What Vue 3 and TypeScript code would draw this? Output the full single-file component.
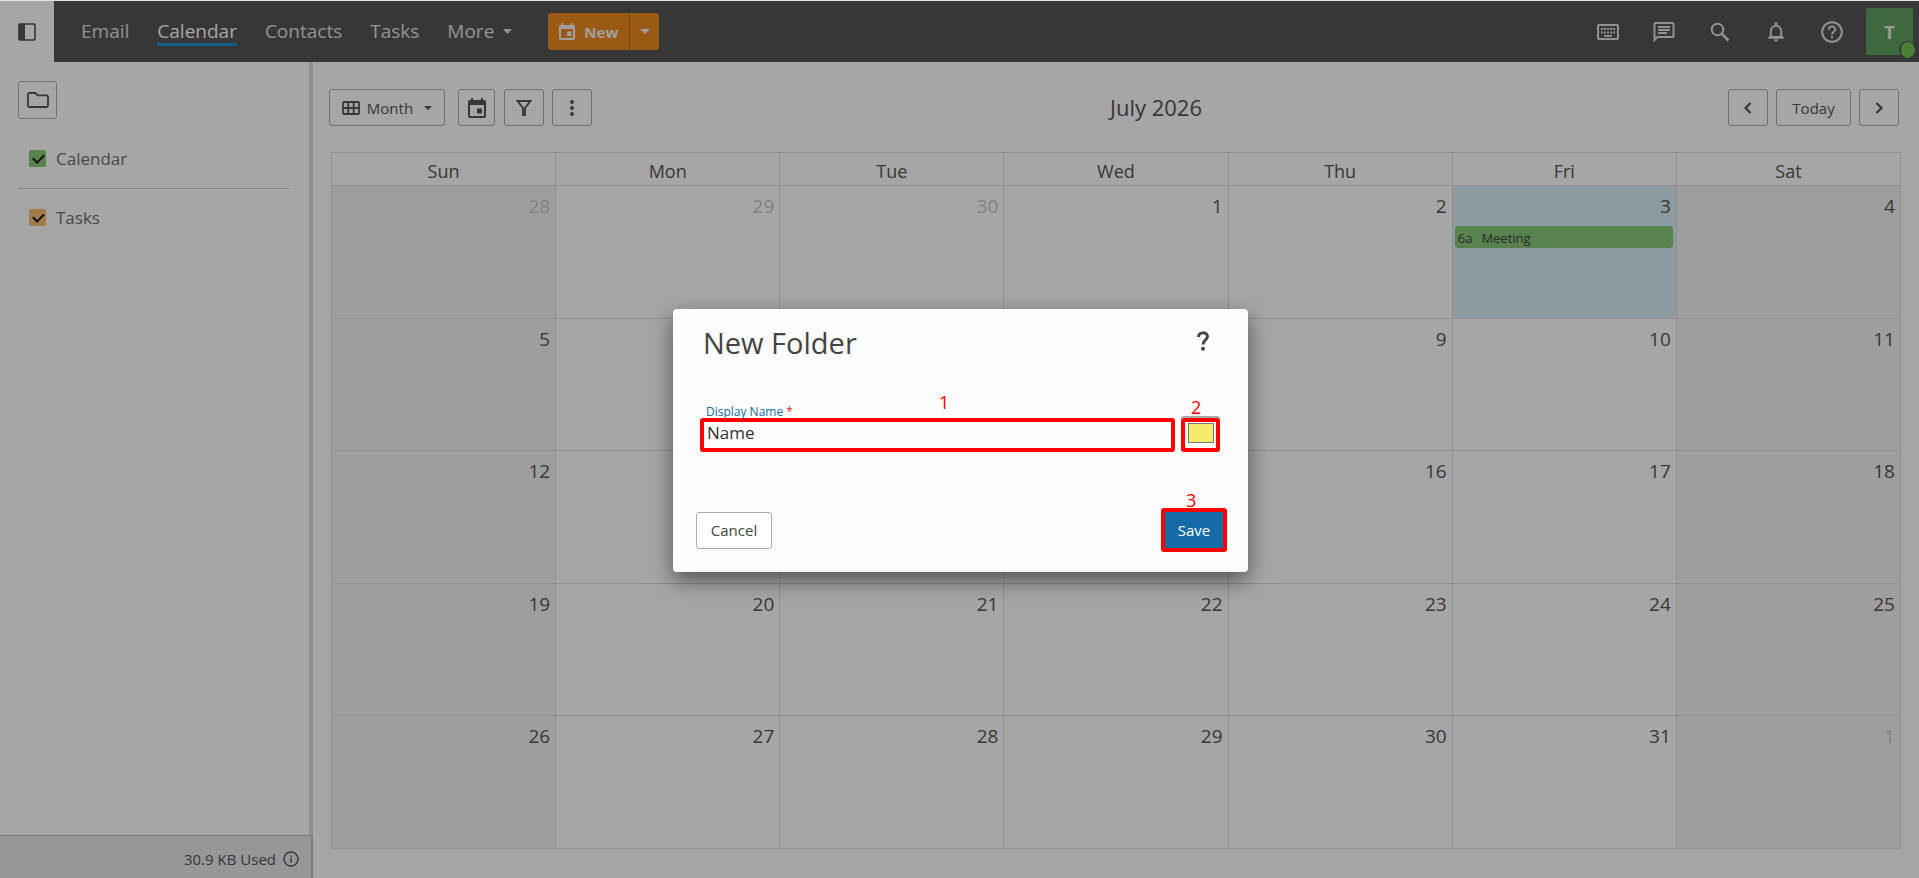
<script setup lang="ts">
import { ref } from 'vue'

interface Day { n: number; other?: boolean; today?: boolean; event?: { time: string; title: string } }

const dayNames: string[] = ['Sun', 'Mon', 'Tue', 'Wed', 'Thu', 'Fri', 'Sat']
const weeks: Day[][] = Array.from({ length: 5 }, (_, w) =>
  Array.from({ length: 7 }, (_, d): Day => {
    const i = w * 7 + d - 2
    if (i < 1) return { n: 30 + i, other: true }
    if (i > 31) return { n: i - 31, other: true }
    return i === 3 ? { n: i, today: true, event: { time: '6a', title: 'Meeting' } } : { n: i }
  })
)
const folderName = ref('Name')
const showCalendar = ref(true)
const showTasks = ref(true)
</script>

<template>
  <div class="app">
    <header class="topbar">
      <button class="panel-toggle" aria-label="Toggle folder panel">
        <svg width="18" height="18" viewBox="0 0 18 18"><rect x="1" y="1" width="16" height="16" rx="1" fill="none" stroke="currentColor" stroke-width="1.6" /><path d="M1 1h6v16H1z" fill="currentColor" /></svg>
      </button>
      <nav class="nav">
        <a href="#">Email</a>
        <a href="#" class="active">Calendar</a>
        <a href="#">Contacts</a>
        <a href="#">Tasks</a>
        <a href="#" class="more">More <svg width="9" height="5" viewBox="0 0 9 5"><path d="M0 0h9L4.500 5z" fill="currentColor" /></svg></a>
      </nav>
      <div class="new-group">
        <button class="new-main">
          <svg width="16" height="17" viewBox="0 0 16 17" fill="currentColor"><path fill-rule="evenodd" d="M2.500 0h2v2h7V0h2v2H14a2 2 0 0 1 2 2v11a2 2 0 0 1-2 2H2a2 2 0 0 1-2-2V4a2 2 0 0 1 2-2h.5zM2 6v9h12V6z" /><path d="M8 8.500h4.500V13H8z" /></svg>
          New
        </button>
        <button class="new-drop" aria-label="More new items"><svg width="10" height="5" viewBox="0 0 10 5"><path d="M0 0h10L5 5z" fill="currentColor" /></svg></button>
      </div>
      <div class="tools">
        <button aria-label="Keyboard shortcuts"><svg width="22" height="16" viewBox="0 0 22 16"><rect x="1" y="1" width="20" height="14" rx="1" fill="none" stroke="currentColor" stroke-width="2" /><path d="M4 5h14M4 8.500h14" stroke="currentColor" stroke-width="2" stroke-dasharray="2 1" /><path d="M7 12h8" stroke="currentColor" stroke-width="1.800" /></svg></button>
        <button aria-label="Chat"><svg width="22" height="20" viewBox="0 0 22 20" fill="none" stroke="currentColor" stroke-width="2"><path d="M1.500 18V2a1 1 0 0 1 1-1h17a1 1 0 0 1 1 1v12a1 1 0 0 1-1 1h-15z" /><path d="M5 5h12M5 8h12M5 11h9" stroke-width="1.800" /></svg></button>
        <button aria-label="Search"><svg width="20" height="20" viewBox="0 0 20 20" fill="none" stroke="currentColor" stroke-width="2"><circle cx="7.500" cy="7.500" r="5.800" /><path d="M11.800 11.800l6.700 6.700" stroke-width="2.600" /></svg></button>
        <button aria-label="Notifications"><svg width="18" height="20" viewBox="0 0 18 20"><path d="M2 15.500h14M3.800 15V9a5.200 5.200 0 0 1 10.400 0v6" fill="none" stroke="currentColor" stroke-width="1.900" /><path d="M2.500 14L.5 16.400h17l-2-2.400zM7.700 1.300a1.300 1.300 0 0 1 2.600 0V4H7.700zM7 17.500h4a2 2 0 0 1-4 0z" fill="currentColor" /></svg></button>
        <button aria-label="Help"><svg width="22" height="22" viewBox="0 0 22 22" fill="none" stroke="currentColor" stroke-width="2"><circle cx="11" cy="11" r="9.800" /><path d="M7.800 8.800c0-4.400 6.500-4.200 6.500-.5 0 2.400-3.300 2.500-3.300 5.200" /><path d="M11 15v2.200" /></svg></button>
        <button class="avatar" aria-label="Account">T<span class="presence"></span></button>
      </div>
    </header>

    <div class="body">
      <aside class="sidebar">
        <div class="folders">
          <button class="btn folder-btn" aria-label="New folder"><svg width="22" height="16" viewBox="0 0 22 16"><path d="M2.500 1h5.800l2.400 2.400h8.800q1.500 0 1.500 1.500v8.600q0 1.500-1.500 1.500h-17Q1 15 1 13.500v-11Q1 1 2.500 1z" fill="none" stroke="currentColor" stroke-width="1.800" /></svg></button>
          <label class="folder"><input v-model="showCalendar" type="checkbox" class="green" />Calendar</label>
          <hr />
          <label class="folder"><input v-model="showTasks" type="checkbox" class="orange" />Tasks</label>
        </div>
        <footer class="quota">
          30.9 KB Used
          <svg width="16" height="16" viewBox="0 0 16 16" fill="none" stroke="currentColor" stroke-width="1.400"><circle cx="8" cy="8" r="7" /><path d="M8 7v4.500M8 4.500V6" /></svg>
        </footer>
      </aside>

      <main class="main">
        <div class="toolbar">
          <button class="btn month">
            <svg width="18" height="14" viewBox="0 0 18 14" fill="none" stroke="currentColor" stroke-width="1.800"><rect x="1" y="1" width="16" height="12" rx="1" /><path d="M1 7h16M6.300 1v12M11.700 1v12" /></svg>
            Month
            <svg class="caret" width="8" height="4" viewBox="0 0 8 4"><path d="M0 0h8L4 4z" fill="currentColor" /></svg>
          </button>
          <button class="btn pick" aria-label="Pick date"><svg width="18" height="20" viewBox="0 0 18 20" fill="currentColor"><path fill-rule="evenodd" d="M3 0h2v2h8V0h2v2h1a2 2 0 0 1 2 2v14a2 2 0 0 1-2 2H2a2 2 0 0 1-2-2V4a2 2 0 0 1 2-2h1zM2 7v11h14V7z" /><path d="M9 10.500h5v5H9z" /></svg></button>
          <button class="btn square" aria-label="Filter"><svg width="16" height="16" viewBox="0 0 16 16"><path d="M1.500 1h13L9 8v7H7V8z" fill="none" stroke="currentColor" stroke-width="1.800" /></svg></button>
          <button class="btn square" aria-label="More actions"><svg width="4" height="16" viewBox="0 0 4 16" fill="currentColor"><circle cx="2" cy="2" r="2" /><circle cx="2" cy="8" r="2" /><circle cx="2" cy="14" r="2" /></svg></button>
          <h1>July 2026</h1>
          <div class="pager">
            <button class="btn square" aria-label="Previous month"><svg width="8" height="12" viewBox="0 0 8 12"><path d="M6.500 1l-5 5 5 5" fill="none" stroke="currentColor" stroke-width="2.200" /></svg></button>
            <button class="btn today-btn">Today</button>
            <button class="btn square" aria-label="Next month"><svg width="8" height="12" viewBox="0 0 8 12"><path d="M1.500 1l5 5-5 5" fill="none" stroke="currentColor" stroke-width="2.200" /></svg></button>
          </div>
        </div>
        <table class="grid">
          <thead><tr><th v-for="d in dayNames" :key="d" scope="col">{{ d }}</th></tr></thead>
          <tbody>
            <tr v-for="(week, w) in weeks" :key="w">
              <td v-for="(day, d) in week" :key="d" :class="{ weekend: d === 0 || d === 6, other: day.other, today: day.today }">
                <div class="num">{{ day.n }}</div>
                <div v-if="day.event" class="event"><span>{{ day.event.time }}</span><span>{{ day.event.title }}</span></div>
              </td>
            </tr>
          </tbody>
        </table>
      </main>
    </div>

    <div class="backdrop">
      <section class="dialog" role="dialog" aria-modal="true" aria-labelledby="dialog-title">
        <div class="dialog-head">
          <h2 id="dialog-title">New Folder</h2>
          <button class="help" aria-label="Help"><svg width="12" height="20" viewBox="0 0 12 20"><path d="M1.500 6C1.500 .4 10.500 .6 10.500 5.600 10.500 9 6 9 6 13.500" fill="none" stroke="currentColor" stroke-width="2.900" /><circle cx="6" cy="17.700" r="2" fill="currentColor" /></svg></button>
        </div>
        <div class="fields">
          <div class="name-field">
            <label for="folder-name">Display Name <span class="req">*</span></label>
            <input id="folder-name" v-model="folderName" type="text" class="marked" />
            <span class="mark mark-name">1</span>
          </div>
          <div class="color-field">
            <button class="color marked" aria-label="Folder color"><span class="swatch"></span></button>
            <span class="mark mark-color">2</span>
          </div>
        </div>
        <div class="actions">
          <button class="cancel">Cancel</button>
          <div class="save-wrap">
            <button class="save marked">Save</button>
            <span class="mark mark-save">3</span>
          </div>
        </div>
      </section>
    </div>
  </div>
</template>

<style>
html, body, #app { height: 100%; }
body { margin: 0; }
</style>

<style scoped>
.app { position: relative; box-sizing: border-box; display: flex; flex-direction: column; min-height: 100%; border-top: 1px solid #dfe3df; background: #fff; color: #555; font-family: "Segoe UI", "Open Sans", "Noto Sans", sans-serif; font-size: 16px; }
.app * { box-sizing: border-box; }
button { font: inherit; color: inherit; background: none; border: 0; padding: 0; display: flex; align-items: center; justify-content: center; }
svg { display: block; flex: none; }
.topbar { display: flex; align-items: center; height: 61px; flex: none; background: #555; color: #e0e0e0; }
.panel-toggle { width: 54px; height: 61px; background: #fff; color: #555; }
.nav { display: flex; gap: 28px; margin-left: 27px; padding-top: 2px; font-size: 19px; line-height: 24px; }
.nav a { color: inherit; text-decoration: none; border-bottom: 3px solid transparent; }
.nav a.active { color: #fff; border-color: #1f90d0; }
.nav .more { display: flex; align-items: center; gap: 9px; }
.new-group { display: flex; height: 37px; margin-left: 36px; background: #ed8a20; border-radius: 3px; color: #f4f4f4; }
.new-main { width: 82px; gap: 9px; font-size: 15px; font-weight: 700; border-right: 1px solid #bd6a10; }
.new-drop { width: 29px; }
.tools { display: flex; align-items: center; margin-left: auto; gap: 12px; padding-right: 6px; }
.tools button { width: 44px; height: 47px; }
.tools .avatar { position: relative; width: 47px; background: #60a060; border-radius: 2px; font-weight: 700; font-size: 18px; color: #eee; }
.presence { position: absolute; right: -2px; bottom: -3px; width: 16px; height: 17px; border-radius: 50%; background: #74c550; border: 2px solid #555; border-width: 1px 0 0 2px; }

.body { display: flex; flex: 1; }
.sidebar { display: flex; flex-direction: column; width: 313px; flex: none; }
.folders { flex: 1; padding: 19px 19px 0 18px; border-right: 4px solid #dcdcdc; }
.btn { height: 37px; border: 1px solid #acacac; border-radius: 3px; }
.folder-btn { width: 39px; height: 38px; }
.folder { display: flex; align-items: center; gap: 10px; margin-left: 11px; height: 56px; font-size: 17px; color: #707070; }
.folder-btn + .folder { margin-top: 13px; padding-bottom: 4px; }
.folder input { appearance: none; margin: 0; width: 17px; height: 17px; border-radius: 2px; background: #88ca78; }
.folder input.orange { background: #f8bd70; }
.folder input:checked::after { content: ""; display: block; width: 9px; height: 5px; margin: 4px 0 0 4px; border: solid #181818; border-width: 0 0 2px 2px; transform: rotate(-45deg); }
hr { margin: 0 0 0 1px; border: 0; border-top: 1px solid #d4d4d4; }
.quota { display: flex; align-items: center; justify-content: flex-end; gap: 7px; height: 43px; padding: 3px 12px 0 0; background: #e8e8e8; border: solid #bdbdbd; border-width: 1px 2px 0 0; font-size: 15px; }

.main { flex: 1; min-width: 0; display: flex; flex-direction: column; padding: 27px 18px 29px 16px; }
.toolbar { display: flex; height: 37px; padding-right: 2px; }
.month { width: 116px; gap: 7px; font-size: 15px; }
.month .caret { margin-left: 4px; }
.pick { width: 37px; margin-left: 13px; }
.square { width: 40px; }
.pick + .square { margin-left: 9px; }
.square + .square { margin-left: 8px; }
h1 { flex: 1; text-align: center; padding-right: 8px; margin: 0; font-size: 22px; line-height: 37px; font-weight: 400; }
.pager { display: flex; gap: 8px; }
.today-btn { width: 75px; font-size: 15px; }
.grid { flex: 1; margin: 26px 0 0 2px; border-collapse: collapse; display: grid; grid-template-rows: 33px 1fr; border: solid #dcdcdc; border-width: 1px 0 0 1px; }
.grid tbody { display: grid; grid-template-rows: repeat(5, 1fr); }
.grid tr { display: grid; grid-template-columns: repeat(7, 1fr); }
.grid th, .grid td { padding: 0; border: solid #dcdcdc; border-width: 0 1px 1px 0; }
.grid th { font-size: 18px; font-weight: 400; line-height: 36px; height: 33px; }
.grid td { padding: 6px 3px 0 2px; font-size: 19px; line-height: 28px; }
.num { text-align: right; padding-right: 2px; }
.weekend { background: #f3f3f3; }
.today { background: #d9edf7; }
.other { color: #c8c8c8; }
.event { display: flex; gap: 9px; height: 22px; margin-top: 6px; padding: 0 3px; border-radius: 4px; background: #88ca78; color: #444; font-size: 13px; line-height: 24px; }

.backdrop { position: absolute; inset: 0; display: flex; align-items: center; justify-content: center; background: rgba(0, 0, 0, .35); padding: 2px 0 0 2px; }
.dialog { width: 575px; background: #fcfcfc; border-radius: 4px; box-shadow: 0 8px 22px rgba(0, 0, 0, .5); color: #444; padding: 12px 21px 20px 23px; }
.dialog-head { display: flex; justify-content: space-between; padding: 0 18px 0 7px; }
h2 { margin: 0; font-size: 29px; line-height: 44px; font-weight: 400; }
.help { height: 40px; }
.fields { display: flex; align-items: flex-end; gap: 6px; margin: 41px 7px 0 4px; }
.name-field { position: relative; flex: 1; }
.name-field label { display: block; padding-left: 6px; font-size: 12px; line-height: 12px; color: #146ba5; }
.req { color: #e53030; }
.marked { border: 4px solid #ff0000; border-radius: 3px; }
.name-field input { display: block; width: 100%; height: 34px; padding: 0 3px 6px; background: transparent; font-family: inherit; font-size: 17px; color: #333; outline: none; }
.color-field, .save-wrap { position: relative; }
.color { width: 39px; height: 34px; align-items: flex-start; padding-top: 1px; box-shadow: 0 -2px 0 #aaa; }
.swatch { width: 26px; height: 20px; background: #f6eb6b; border: 1px solid #777; }
.actions { display: flex; justify-content: space-between; align-items: center; margin-top: 56px; }
.cancel { width: 76px; height: 37px; border: 1px solid #acacac; border-radius: 3px; background: #fff; font-size: 15px; }
.save { width: 66px; height: 44px; background: #146ba5; color: #fff; font-size: 15px; }
.mark { position: absolute; color: #ff0000; font-size: 18px; line-height: 20px; }
.mark-name { left: 239px; top: -14px; }
.mark-color { left: 10px; top: -21px; }
.mark-save { left: 25px; top: -18px; }
</style>
